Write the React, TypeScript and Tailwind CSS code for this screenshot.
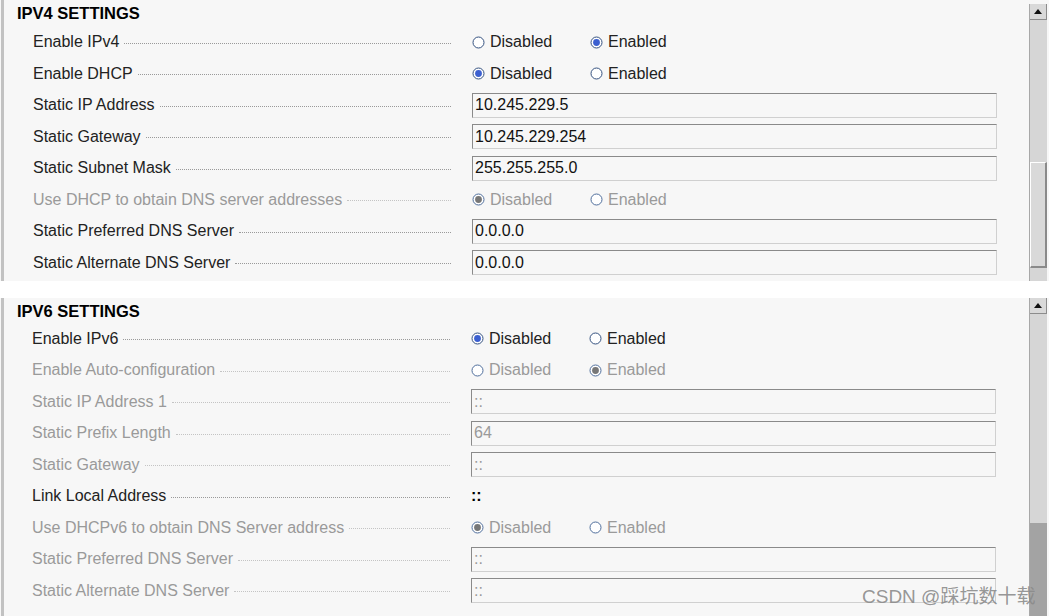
import type { ReactNode } from 'react';

type Opt = 'disabled' | 'enabled';

const Radio = ({ on, dim }: { on: boolean; dim: boolean }) => (
    <svg width="13" height="13" viewBox="0 0 13 13" className="shrink-0">
        <circle cx="6.5" cy="6.5" r="5.5" fill="#fff" stroke={dim ? '#4f6e9c' : '#34517f'} strokeWidth="1" />
        {on && <circle cx="6.5" cy="6.5" r="3.4" fill={dim ? '#777' : '#3b5fd0'} />}
    </svg>
);

const RadioPair = ({ value, dim = false }: { value: Opt; dim?: boolean }) => (
    <div className={`flex items-center ${dim ? 'text-[#9a9a9a]' : 'text-[#222]'}`}>
        <label className="flex w-[118px] items-center gap-[5px]">
            <Radio on={value === 'disabled'} dim={dim} />
            <span>Disabled</span>
        </label>
        <label className="flex items-center gap-[5px]">
            <Radio on={value === 'enabled'} dim={dim} />
            <span>Enabled</span>
        </label>
    </div>
);

const Field = ({ value, dim = false }: { value: string; dim?: boolean }) => (
    <div
        className={`flex h-[25px] w-[525px] items-center border border-t-[#8a8a8a] border-l-[#8a8a8a] border-b-[#d0d0d0] border-r-[#d0d0d0] bg-[#f7f7f7] pl-[2px] ${
            dim ? 'text-[#9a9a9a]' : 'text-[#111]'
        }`}
    >
        {value}
    </div>
);

const Row = ({ label, dim = false, children }: { label: string; dim?: boolean; children: ReactNode }) => (
    <div className="flex h-[31.5px] items-center">
        <div className="flex w-[418px] items-center">
            <span className={`whitespace-nowrap ${dim ? 'text-[#9a9a9a]' : 'text-[#222]'}`}>{label}</span>
            <div
                className={`ml-[5px] mt-[2px] flex-1 border-b border-dotted ${dim ? 'border-[#c4c4c4]' : 'border-[#9a9a9a]'}`}
            />
        </div>
        <div className="ml-[21px]">{children}</div>
    </div>
);

const Scrollbar = ({ before, thumb, dark = false }: { before: number; thumb: number; dark?: boolean }) => (
    <div className="mr-[2px] flex w-[18px] flex-col border-l border-[#a8a8a8] bg-[#d6d6d6]">
        <div className="flex h-[16px] items-center justify-center border-b border-r border-[#8c8c8c] border-t-white bg-[#d9d9d9]">
            <svg width="8" height="5" viewBox="0 0 8 5">
                <path d="M0 5 L4 0 L8 5 Z" fill="#111" />
            </svg>
        </div>
        <div style={{ height: before }} />
        {dark ? (
            <div className="flex-1 bg-[#a3a3a3]" />
        ) : (
            <div
                style={{ height: thumb }}
                className="border-b-2 border-r-2 border-l border-t border-b-[#8a8a8a] border-r-[#8a8a8a] border-l-white border-t-white bg-[#d9d9d9]"
            />
        )}
    </div>
);

const Panel = ({ title, children, scroll, className }: { title: string; children: ReactNode; scroll: ReactNode; className: string }) => (
    <div className={`flex bg-[#f7f7f7] ${className}`}>
        <div className="ml-[1px] w-[3px] bg-[#c2c2c2]" />
        <div className="flex-1 pl-[13px]">
            <h2 className="h-[22px] pt-[4px] text-[16.5px] font-bold leading-[18px] text-black">{title}</h2>
            <div className="pl-[16px]">{children}</div>
        </div>
        {scroll}
    </div>
);

export default function App() {
    return (
        <div className="relative h-[616px] w-[1049px] overflow-hidden bg-white font-['Liberation_Sans',Arial,sans-serif] text-[16px] leading-[20px]">
            <Panel
                title="IPV4 SETTINGS"
                className="h-[281px] pt-0"
                scroll={
                    <div className="mt-[4px] flex">
                        <Scrollbar before={142} thumb={106} />
                    </div>
                }
            >
                <div className="pt-[4.5px]">
                    <Row label="Enable IPv4">
                        <RadioPair value="enabled" />
                    </Row>
                    <Row label="Enable DHCP">
                        <RadioPair value="disabled" />
                    </Row>
                    <Row label="Static IP Address">
                        <Field value="10.245.229.5" />
                    </Row>
                    <Row label="Static Gateway">
                        <Field value="10.245.229.254" />
                    </Row>
                    <Row label="Static Subnet Mask">
                        <Field value="255.255.255.0" />
                    </Row>
                    <Row label="Use DHCP to obtain DNS server addresses" dim>
                        <RadioPair value="disabled" dim />
                    </Row>
                    <Row label="Static Preferred DNS Server">
                        <Field value="0.0.0.0" />
                    </Row>
                    <Row label="Static Alternate DNS Server">
                        <Field value="0.0.0.0" />
                    </Row>
                </div>
            </Panel>

            <div className="h-[17px]" />

            <Panel title="IPV6 SETTINGS" className="h-[318px]" scroll={<Scrollbar before={209} thumb={0} dark />}>
                <div className="-ml-[1px] pt-[3px]">
                    <Row label="Enable IPv6">
                        <RadioPair value="disabled" />
                    </Row>
                    <Row label="Enable Auto-configuration" dim>
                        <RadioPair value="enabled" dim />
                    </Row>
                    <Row label="Static IP Address 1" dim>
                        <Field value="::" dim />
                    </Row>
                    <Row label="Static Prefix Length" dim>
                        <Field value="64" dim />
                    </Row>
                    <Row label="Static Gateway" dim>
                        <Field value="::" dim />
                    </Row>
                    <Row label="Link Local Address">
                        <span className="font-bold text-black">::</span>
                    </Row>
                    <Row label="Use DHCPv6 to obtain DNS Server address" dim>
                        <RadioPair value="disabled" dim />
                    </Row>
                    <Row label="Static Preferred DNS Server" dim>
                        <Field value="::" dim />
                    </Row>
                    <Row label="Static Alternate DNS Server" dim>
                        <Field value="::" dim />
                    </Row>
                </div>
            </Panel>

            <div className="absolute left-[862px] top-[586px] font-['Liberation_Sans','Noto_Sans_CJK_SC',sans-serif] text-[19px] leading-[22px] text-[#8a8a8a]/90">
                CSDN @踩坑数十载
            </div>
        </div>
    );
}
